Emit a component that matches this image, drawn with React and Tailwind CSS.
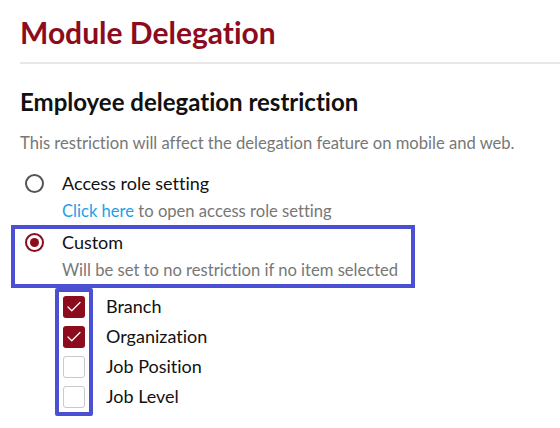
import { Check } from "lucide-react"

const items = [
    { label: "Branch", checked: true },
    { label: "Organization", checked: true },
    { label: "Job Position", checked: false },
    { label: "Job Level", checked: false },
]

export default function App() {
    return (
        <div className="w-[560px] h-[428px] bg-white pl-5 pt-[14px] font-['Lato',sans-serif] [font-variant-ligatures:none] overflow-hidden">
            <h1 className="text-[30px] leading-[36px] font-bold text-[#8c0b1c]">Module Delegation</h1>
            <div className="mt-3 h-[2px] bg-[#e7e7e7]" />

            <h2 className="mt-[23px] text-[24px] leading-[29px] font-bold text-[#111]">
                Employee delegation restriction
            </h2>
            <p className="mt-[15px] text-[16.6px] leading-6 text-[#777]">
                This restriction will affect the delegation feature on mobile and web.
            </p>

            {/* Access role option */}
            <div className="mt-[15px] flex pl-[5px]">
                <div className="h-[27px] flex items-center">
                    <span className="h-[19px] w-[19px] rounded-full border-2 border-[#555]" />
                </div>
                <div className="ml-[18px]">
                    <div className="text-[18px] leading-[27px] text-[#111]">Access role setting</div>
                    <div className="text-[16.6px] leading-[28px] text-[#777]">
                        <span className="text-[#1e9fe6]">Click here</span> to open access role setting
                    </div>
                </div>
            </div>

            {/* Custom option */}
            <div className="ml-[-9px] w-[404px] border-4 border-[#4b4fd2] pl-[10px] flex">
                <div className="h-[27px] flex items-center">
                    <span className="h-[19px] w-[19px] rounded-full border-2 border-[#8c0b1c] flex items-center justify-center">
                        <span className="h-[9px] w-[9px] rounded-full bg-[#8c0b1c]" />
                    </span>
                </div>
                <div className="ml-[18px]">
                    <div className="text-[18px] leading-[27px] text-[#111]">Custom</div>
                    <div className="text-[16.6px] leading-[28px] text-[#777]">Will be set to no restriction if no item selected</div>
                </div>
            </div>

            <div className="flex">
                <div className="ml-[35px] border-4 border-[#4b4fd2] px-1 rounded-[2px]">
                    {items.map((it) => (
                        <div key={it.label} className="h-[30px] flex items-center">
                            {it.checked ? (
                                <span className="h-[22px] w-[22px] rounded-[3px] bg-[#8c0b1c] flex items-center justify-center">
                                    <Check className="h-[18px] w-[18px] text-white" strokeWidth={1.75} />
                                </span>
                            ) : (
                                <span className="h-[22px] w-[22px] rounded-[3px] border border-[#c9c9c9] bg-white" />
                            )}
                        </div>
                    ))}
                </div>
                <div className="ml-[13px] pt-[3px]">
                    {items.map((it) => (
                        <div key={it.label} className="h-[30px] leading-[30px] text-[18px] text-[#111]">
                            {it.label}
                        </div>
                    ))}
                </div>
            </div>
        </div>
    )
}
